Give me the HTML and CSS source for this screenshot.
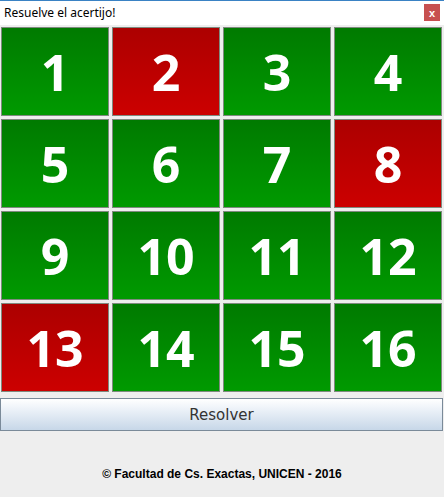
FILE: index.html
```html
<!DOCTYPE html>
<html lang="es">
<head>
<meta charset="utf-8">
<title>Resuelve el acertijo!</title>
<link rel="stylesheet" href="styles.css">
</head>
<body>
<div class="window">
  <header class="titlebar">
    <span class="title">Resuelve el acertijo!</span>
    <span class="close">x</span>
  </header>
  <main class="board">
    <div class="tile green">1</div>
    <div class="tile red">2</div>
    <div class="tile green">3</div>
    <div class="tile green">4</div>
    <div class="tile green">5</div>
    <div class="tile green">6</div>
    <div class="tile green">7</div>
    <div class="tile red">8</div>
    <div class="tile green">9</div>
    <div class="tile green">10</div>
    <div class="tile green">11</div>
    <div class="tile green">12</div>
    <div class="tile red">13</div>
    <div class="tile green">14</div>
    <div class="tile green">15</div>
    <div class="tile green">16</div>
  </main>
  <button class="solve">Resolver</button>
  <footer class="credits">© Facultad de Cs. Exactas, UNICEN - 2016</footer>
</div>
</body>
</html>
```
FILE: styles.css
```css
html, body {
  margin: 0;
  padding: 0;
}
body {
  background: #eeeeee;
  width: 444px;
  height: 497px;
  overflow: hidden;
}
.window {
  display: flex;
  flex-direction: column;
  height: 497px;
}
.titlebar {
  height: 25px;
  box-sizing: border-box;
  border-top: 1px solid #3a82c4;
  background: #ffffff;
  display: flex;
  align-items: center;
  justify-content: space-between;
  padding: 0 4px 0 4px;
}
.title {
  font-family: "Noto Sans", sans-serif;
  font-size: 12px;
  color: #000000;
  margin-top: -2px;
}
.close {
  width: 16px;
  height: 17px;
  background: #c75050;
  color: #ffffff;
  font-family: "Liberation Sans", sans-serif;
  font-weight: bold;
  font-size: 11px;
  display: flex;
  align-items: center;
  justify-content: center;
  margin-top: -1px;
}
.board {
  display: grid;
  grid-template-columns: repeat(4, 108px);
  grid-auto-rows: 89px;
  column-gap: 3px;
  row-gap: 3px;
  padding: 2px 2px 0 1px;
}
.tile {
  box-sizing: border-box;
  border: 1px solid #7f8a7f;
  display: flex;
  align-items: center;
  justify-content: center;
  color: #ffffff;
  font-family: "Open Sans", sans-serif;
  font-weight: 700;
  font-size: 50px;
  letter-spacing: 0;
}
.green {
  background: linear-gradient(to bottom, #007a00, #009a00);
}
.red {
  background: linear-gradient(to bottom, #ac0000, #cc0000);
}
.solve {
  margin: 6px 1px 0 0;
  height: 33px;
  box-sizing: border-box;
  border: 1px solid #7a8a99;
  background: linear-gradient(to bottom, #ffffff 0%, #eef3f9 30%, #c7d7e8 100%);
  font-family: "DejaVu Sans", sans-serif;
  font-size: 15px;
  color: #333333;
  padding: 0;
}
.credits {
  flex: 1;
  display: flex;
  align-items: center;
  justify-content: center;
  padding-top: 19px;
  font-family: "Liberation Sans", sans-serif;
  font-weight: bold;
  font-size: 12px;
  color: #000000;
}
```
